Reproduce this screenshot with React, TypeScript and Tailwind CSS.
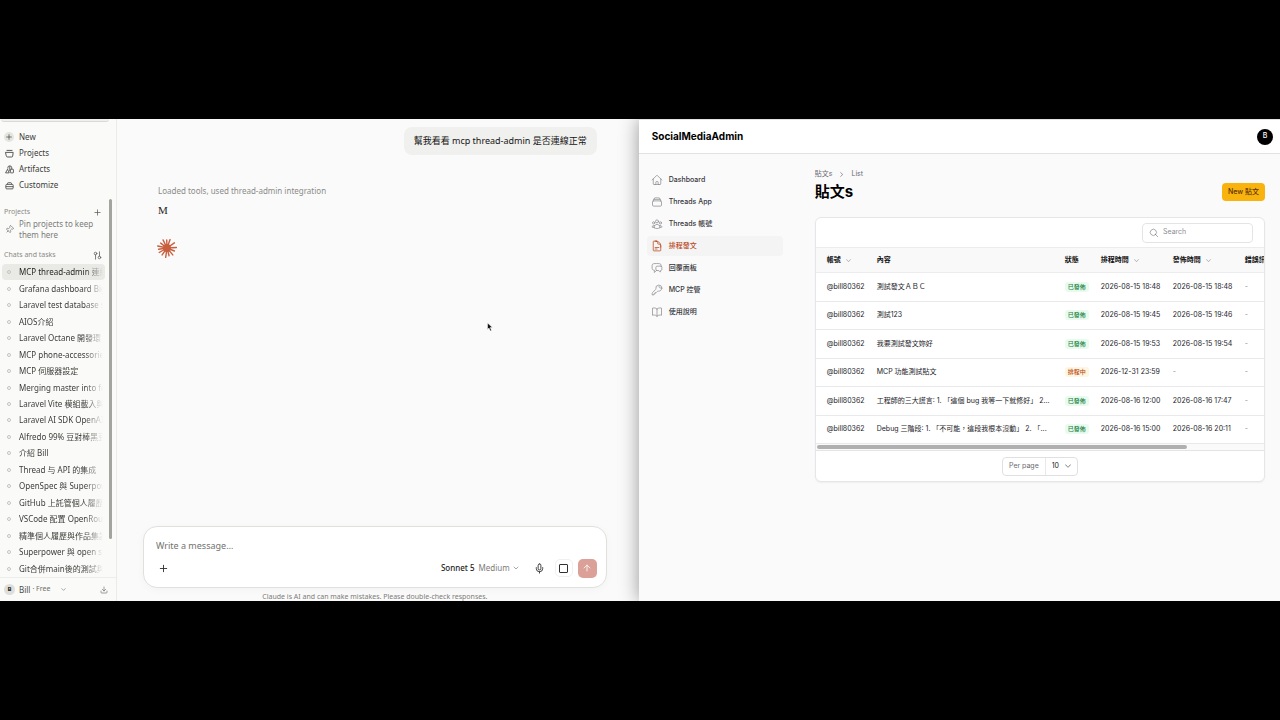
import React from "react";
import {
  HiOutlineHome,
  HiOutlineRectangleStack,
  HiOutlineUserGroup,
  HiOutlineDocumentText,
  HiOutlineChatBubbleLeftRight,
  HiOutlineKey,
  HiOutlineBookOpen,
  HiOutlineMagnifyingGlass,
  HiChevronDown,
  HiChevronRight,
} from "react-icons/hi2";
import { ArrowUp, ChevronDown, Download, Mic, Pin, Plus } from "lucide-react";

const chats = [
  "MCP thread-admin 連線",
  "Grafana dashboard Big",
  "Laravel test database s",
  "AIOS介紹",
  "Laravel Octane 開發環",
  "MCP phone-accessorie",
  "MCP 伺服器設定",
  "Merging master into fe",
  "Laravel Vite 模組載入與",
  "Laravel AI SDK OpenAI",
  "Alfredo 99% 豆對棒黑豆",
  "介紹 Bill",
  "Thread 与 API 的集成",
  "OpenSpec 與 Superpow",
  "GitHub 上託管個人履歷",
  "VSCode 配置 OpenRout",
  "精準個人履歷與作品集設",
  "Superpower 與 open sp",
  "Git合併main後的測試與",
];

const navItems = [
  { label: "Dashboard", Icon: HiOutlineHome },
  { label: "Threads App", Icon: HiOutlineRectangleStack },
  { label: "Threads 帳號", Icon: HiOutlineUserGroup },
  { label: "排程發文", Icon: HiOutlineDocumentText, active: true },
  { label: "回覆面板", Icon: HiOutlineChatBubbleLeftRight },
  { label: "MCP 控管", Icon: HiOutlineKey },
  { label: "使用說明", Icon: HiOutlineBookOpen },
];

const posts = [
  { text: "測試發文ＡＢＣ", done: true, planned: "2026-08-15 18:48", sent: "2026-08-15 18:48" },
  { text: "測試123", done: true, planned: "2026-08-15 19:45", sent: "2026-08-15 19:46" },
  { text: "我要測試發文妳好", done: true, planned: "2026-08-15 19:53", sent: "2026-08-15 19:54" },
  { text: "MCP 功能測試貼文", done: false, planned: "2026-12-31 23:59", sent: "-" },
  { text: "工程師的三大謊言: 1. 「這個 bug 我等一下就修好」 2...", done: true, planned: "2026-08-16 12:00", sent: "2026-08-16 17:47" },
  { text: "Debug 三階段: 1. 「不可能，這段我根本沒動」 2. 「...", done: true, planned: "2026-08-16 15:00", sent: "2026-08-16 20:11" },
];

function ProjectsIcon() {
  return (
    <svg viewBox="0 0 16 16" className="size-[9px]" fill="none" stroke="currentColor" strokeWidth="1.5" strokeLinecap="round">
      <path d="M1.500 6h13l-.8 6.500a2 2 0 0 1-2 1.700H4.300a2 2 0 0 1-2-1.700z" strokeLinejoin="round" />
      <path d="M3.500 2.500h9" />
    </svg>
  );
}

function ArtifactsIcon() {
  return (
    <svg viewBox="0 0 16 16" className="size-[9px]" fill="none" stroke="currentColor" strokeWidth="1.4" strokeLinejoin="round">
      <path d="M5 6.500V5a3.500 3.500 0 0 1 7 0v2.500" />
      <path d="M4.500 7.500 1 14h6.500z" />
      <rect x="9.500" y="7.500" width="5.500" height="6.500" rx="1" />
      <path d="M8.500 2v9" />
    </svg>
  );
}

function CustomizeIcon() {
  return (
    <svg viewBox="0 0 16 16" className="size-[9px]" fill="none" stroke="currentColor" strokeWidth="1.4" strokeLinejoin="round">
      <rect x="1.5" y="6" width="13" height="8" rx="1.5" />
      <path d="M4.500 6V4.500A1.500 1.500 0 0 1 6 3h4a1.500 1.500 0 0 1 1.500 1.500V6M1.500 10h13" />
    </svg>
  );
}

function FilterIcon() {
  return (
    <svg viewBox="0 0 16 16" className="size-[9px]" fill="none" stroke="currentColor" strokeWidth="1.4" strokeLinecap="round">
      <circle cx="4.500" cy="4.500" r="2.300" />
      <path d="M4.500 7v7.500M11.500 1.500V9" />
      <circle cx="11.500" cy="11.500" r="2.300" />
    </svg>
  );
}

function Burst() {
  const rays = [
    [9.5, -3], [8, 22], [9, 50], [8, 75], [9.5, 98], [8.500, 125],
    [9, 150], [8.500, 172], [9.500, 192], [8, 218], [9, 244], [8, 268], [9, 290], [9, 325],
  ];
  return (
    <svg viewBox="-10 -10 20 20" className="size-5 text-[#c8603f]" stroke="currentColor" strokeWidth="1.4" strokeLinecap="round">
      <circle r="4" fill="currentColor" stroke="none" />
      {rays.map(([r, deg]) => (
        <path key={deg} d={`M0 0H${r}`} transform={`rotate(${deg})`} />
      ))}
    </svg>
  );
}

function ChatSidebar() {
  const top = [
    { label: "Projects", icon: <ProjectsIcon /> },
    { label: "Artifacts", icon: <ArtifactsIcon /> },
    { label: "Customize", icon: <CustomizeIcon /> },
  ];
  return (
    <aside className="relative flex w-[117px] shrink-0 flex-col border-r border-[#ebebe9] bg-[#fafaf8] text-[#3c3c39]">
      <div className="mr-[7px] ml-px h-[3px] shrink-0 rounded-b-sm border-b border-[#d9d9d5] bg-[#efefec]" />
      <nav className="mt-[7px] flex flex-col text-[8px]">
        <button className="flex h-4 items-center gap-[5px] pl-1 text-left">
          <span className="flex size-[10px] items-center justify-center rounded-full bg-[#e4e4e1]">
            <Plus className="size-[8px]" />
          </span>
          New
        </button>
        {top.map((t) => (
          <a key={t.label} href="#" className="flex h-4 items-center gap-[5px] pl-1">
            <span className="flex w-[10px] justify-center">{t.icon}</span>
            {t.label}
          </a>
        ))}
      </nav>
      <div className="mt-[11px] flex h-4 items-center justify-between pr-[14px] pl-1 text-[7px] text-[#8a8a86]">
        <h2>Projects</h2>
        <button aria-label="Add project" className="text-[#5c5c58]">
          <Plus className="size-[9px]" />
        </button>
      </div>
      <div className="-mt-px flex h-5 items-center gap-[5px] pl-1 text-[8px] leading-[11px] text-[#7c7c78]">
        <span className="flex w-[10px] justify-center">
          <Pin className="size-[9px] rotate-45" />
        </span>
        <p className="w-[84px]">Pin projects to keep them here</p>
      </div>
      <div className="mt-2 flex h-4 items-center justify-between pr-[14px] pl-1 text-[7px] text-[#8a8a86]">
        <h2>Chats and tasks</h2>
        <button aria-label="Filter chats" className="text-[#5c5c58]">
          <FilterIcon />
        </button>
      </div>
      <ul className="flex min-h-0 flex-1 flex-col pt-px text-[8px]">
        {chats.map((c, i) => (
          <li key={c} className="flex min-h-0 flex-1">
            <a
              href="#"
              className={
                i === 0
                  ? "mr-[11px] ml-[2px] flex flex-1 items-center gap-2 rounded-sm bg-[#e9e9e6] pl-[5px] text-[#1f1f1d]"
                  : "mr-[11px] ml-[2px] flex flex-1 items-center gap-2 pl-[5px]"
              }
            >
              <span className="size-1 shrink-0 rounded-full border border-[#c4c4bf]" />
              <span className="w-[84px] overflow-hidden whitespace-nowrap [mask-image:linear-gradient(to_right,black_78%,transparent)]">
                {c}
              </span>
            </a>
          </li>
        ))}
      </ul>
      <div className="flex h-6 shrink-0 items-center border-t border-[#ededea] pr-2 pl-1 text-[7px] text-[#6f6f6b]">
        <span className="flex size-[11px] items-center justify-center rounded-full bg-[#dededa] text-[6px] font-bold text-[#1f1f1d]">B</span>
        <span className="ml-1 text-[8px] text-[#4a4a47]">Bill</span>
        <span className="ml-[2px]">· Free</span>
        <ChevronDown className="ml-[10px] size-[7px]" />
        <Download className="ml-auto size-[8px]" />
      </div>
      <div className="absolute top-20 right-1 h-[340px] w-[3px] rounded-full bg-[#a3a39f]" />
    </aside>
  );
}

function ChatWindow() {
  return (
    <section className="flex min-w-0 flex-1 overflow-hidden bg-[#fafafa] font-['Noto_Sans','Noto_Sans_CJK_TC',sans-serif]">
      <ChatSidebar />
      <main className="relative flex min-w-0 flex-1 flex-col pr-8 pl-[26px]">
        <div className="flex flex-1 flex-col items-start pt-2 pr-[10px] pl-[15px]">
          <p className="flex h-7 items-center self-end rounded-lg bg-[#f0f0ee] px-[10px] text-[9px] text-[#151514]">
            幫我看看 mcp thread-admin 是否連線正常
          </p>
          <p className="mt-7 flex h-4 items-center text-[8px] text-[#8b8b88]">Loaded tools, used thread-admin integration</p>
          <p className="mt-[3px] flex h-4 items-center font-['Liberation_Serif',serif] text-[11px] text-[#262624]">M</p>
          <div className="mt-5 -ml-px">
            <Burst />
          </div>
        </div>
        <form className="flex h-[62px] shrink-0 flex-col rounded-[14px] border border-[#e0e0dd] bg-white pt-3 pr-[9px] pl-3 shadow-[0_2px_8px_rgba(0,0,0,0.03)]">
          <textarea
            aria-label="Message"
            rows={1}
            placeholder="Write a message…"
            className="h-[14px] w-full resize-none text-[9px] leading-[14px] outline-none placeholder:text-[#73736f]"
          />
          <div className="mt-[5px] flex h-5 items-center">
            <button type="button" aria-label="Attach" className="ml-[2px] text-[#30302e]">
              <Plus className="size-[11px]" />
            </button>
            <button type="button" className="ml-auto flex items-center text-[8px] text-[#1d1d1b]">
              <span className="font-medium">Sonnet 5</span>
              <span className="ml-1 text-[#7c7c78]">Medium</span>
              <ChevronDown className="ml-[2px] size-[8px] text-[#7c7c78]" />
            </button>
            <button type="button" aria-label="Dictate" className="ml-[14px] text-[#30302e]">
              <Mic className="size-[11px]" />
            </button>
            <button
              type="button"
              aria-label="Stop"
              className="ml-[10px] flex size-[18px] items-center justify-center rounded-[5px] border border-[#f0f0ee] bg-white"
            >
              <span className="size-[9px] rounded-[1px] border border-[#30302e]" />
            </button>
            <button
              type="button"
              aria-label="Send"
              className="ml-[5px] flex size-[19px] items-center justify-center rounded-[5px] bg-[#dba098] text-white"
            >
              <ArrowUp className="size-[10px]" />
            </button>
          </div>
        </form>
        <p className="h-[13px] shrink-0 overflow-hidden pt-[3px] text-center text-[7px] leading-[11px] text-[#7c7c78]">
          Claude is AI and can make mistakes. Please double-check responses.
        </p>
        <svg viewBox="0 0 12 18" className="absolute top-[203px] left-[370px] h-[10px] w-[6px]">
          <path d="M1 1v13l3-3 2.500 6 2.500-1-2.500-6h4.500z" fill="#111" stroke="#fff" strokeWidth="1" />
        </svg>
      </main>
    </section>
  );
}

function PostsTable() {
  const head = "text-left font-semibold text-[#111] whitespace-nowrap";
  return (
    <div className="overflow-hidden">
      <table className="w-[543px] table-fixed border-collapse text-[7px] text-[#1c1c1f]">
        <colgroup>
          <col className="w-[61px]" />
          <col className="w-[188px]" />
          <col className="w-[36px]" />
          <col className="w-[72px]" />
          <col className="w-[72px]" />
          <col />
        </colgroup>
        <thead>
          <tr className="h-[25px] border-y border-[#ececee] bg-[#f9f9fa]">
            <th scope="col" className={`${head} pl-[11px]`}>
              <span className="flex items-center gap-1">帳號 <HiChevronDown className="size-[7px] text-[#8d8d93]" /></span>
            </th>
            <th scope="col" className={head}>內容</th>
            <th scope="col" className={head}>狀態</th>
            <th scope="col" className={head}>
              <span className="flex items-center gap-1">排程時間 <HiChevronDown className="size-[7px] text-[#8d8d93]" /></span>
            </th>
            <th scope="col" className={head}>
              <span className="flex items-center gap-1">發佈時間 <HiChevronDown className="size-[7px] text-[#8d8d93]" /></span>
            </th>
            <th scope="col" className={head}>錯誤訊息</th>
          </tr>
        </thead>
        <tbody>
          {posts.map((p) => (
            <tr key={p.planned} className="h-[29px] border-b border-[#e9e9eb] even:h-[28px]">
              <td className="pl-[11px]">@bill80362</td>
              <td className="whitespace-nowrap">{p.text}</td>
              <td>
                <span
                  className={
                    p.done
                      ? "inline-block rounded-[3px] bg-[#e9fbef] px-[3px] text-[6px] leading-[10px] font-medium text-[#17803d]"
                      : "inline-block rounded-[3px] bg-[#fff6e2] px-[3px] text-[6px] leading-[10px] font-medium text-[#b8460e]"
                  }
                >
                  {p.done ? "已發佈" : "排程中"}
                </span>
              </td>
              <td className="whitespace-nowrap">{p.planned}</td>
              <td className={p.sent === "-" ? "text-[#8d8d93]" : "whitespace-nowrap"}>{p.sent}</td>
              <td className="text-[#8d8d93]">-</td>
            </tr>
          ))}
        </tbody>
      </table>
      <div className="h-[7px] border-b border-[#e4e4e6] bg-[#fafafa] px-px pt-px">
        <div className="h-1 w-[83%] rounded-full bg-[#b0b0b0]" />
      </div>
    </div>
  );
}

function AdminWindow() {
  return (
    <section className="z-10 flex w-[50.1%] min-w-0 flex-col bg-[#fafafa] font-['Inter','Noto_Sans_CJK_TC',sans-serif] text-[#18181b] shadow-[0_0_18px_rgba(0,0,0,0.4)] [clip-path:inset(0_0_0_-40px)]">
      <header className="flex h-[35px] shrink-0 items-center justify-between border-t border-b border-[#e2e2e4] bg-white pr-[7px] pl-[13px]">
        <a href="#" className="text-[10px] font-bold text-black">SocialMediaAdmin</a>
        <button aria-label="Account" className="flex size-4 items-center justify-center rounded-full bg-black text-[7px] font-medium text-white">B</button>
      </header>
      <div className="flex flex-1">
        <nav className="flex w-36 shrink-0 flex-col gap-[2px] pt-4 pl-2">
          {navItems.map(({ label, Icon, active }) => (
            <a
              key={label}
              href="#"
              className={
                active
                  ? "flex h-5 items-center gap-[6px] rounded bg-[#f4f4f5] pl-1 text-[7px] font-medium text-[#b9481a]"
                  : "flex h-5 items-center gap-[6px] pl-1 text-[7px] font-medium text-[#36363a]"
              }
            >
              <Icon className={active ? "size-3" : "size-3 text-[#8d8d93]"} />
              {label}
            </a>
          ))}
        </nav>
        <main className="min-w-0 flex-1 pt-[14px] pr-[15px] pl-8">
          <div className="flex items-end justify-between">
            <div>
              <nav aria-label="Breadcrumb" className="flex h-3 items-center gap-[6px] text-[7px] text-[#6b6b72]">
                <a href="#">貼文s</a>
                <HiChevronRight className="size-[7px]" />
                <a href="#">List</a>
              </nav>
              <h1 className="text-[15px] leading-6 font-bold text-black">貼文s</h1>
            </div>
            <button className="mb-[3px] h-[18px] rounded bg-[#f9b30f] px-[6px] text-[7px] font-medium text-[#5b3005]">New 貼文</button>
          </div>
          <div className="mt-[13px] overflow-hidden rounded-md border border-[#e6e6e8] bg-white shadow-[0_1px_2px_rgba(0,0,0,0.05)]">
            <div className="flex h-[29px] items-center justify-end pr-[11px]">
              <label className="flex h-5 w-[111px] items-center gap-1 rounded border border-[#e4e4e7] px-[6px]">
                <HiOutlineMagnifyingGlass className="size-[10px] shrink-0 text-[#77777d]" />
                <input type="search" aria-label="Search" placeholder="Search" className="w-full min-w-0 text-[7px] outline-none placeholder:text-[#8d8d93]" />
              </label>
            </div>
            <PostsTable />
            <div className="flex h-[30px] items-center justify-center">
              <div className="flex h-[19px] items-center rounded border border-[#e0e0e3] text-[7px]">
                <label htmlFor="per-page" className="flex h-full items-center border-r border-[#e9e9eb] px-[6px] text-[#6b6b72]">Per page</label>
                <span className="flex items-center pr-[5px] pl-[6px]">
                  <select id="per-page" defaultValue="10" className="w-3 appearance-none outline-none">
                    <option>10</option>
                    <option>25</option>
                    <option>50</option>
                  </select>
                  <HiChevronDown className="size-[8px] text-[#55555a]" />
                </span>
              </div>
            </div>
          </div>
        </main>
      </div>
    </section>
  );
}

export default function App() {
  return (
    <div className="flex min-h-screen bg-black py-[119px]">
      <ChatWindow />
      <AdminWindow />
    </div>
  );
}
